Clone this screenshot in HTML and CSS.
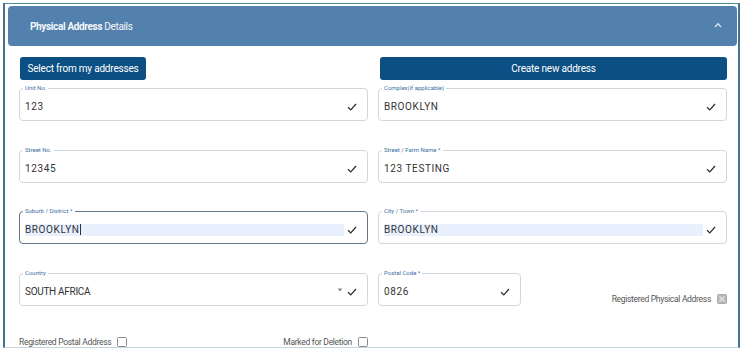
FILE: index.html
```html
<!DOCTYPE html>
<html lang="en">
<head>
<meta charset="utf-8">
<title>Physical Address Details</title>
<link rel="stylesheet" href="styles.css">
</head>
<body>
<div class="frame">
  <div class="header">
    <div class="title"><b>Physical Address</b> Details</div>
    <svg class="chev" width="8" height="6" viewBox="0 0 8 6"><polyline points="1,5 4,1.8 7,5" fill="none" stroke="#dde7f1" stroke-width="1.3"/></svg>
  </div>
  <div class="content">
    <div class="actions">
      <button class="btn btn-left">Select from my addresses</button>
      <button class="btn btn-wide">Create new address</button>
    </div>
    <div class="fields">
      <div class="field">
        <span class="label">Unit No.</span>
        <span class="value">123</span>
        <svg class="check" width="10" height="8" viewBox="0 0 10 8"><polyline points="1,4.3 3.8,7 9,1" fill="none" stroke="#2b2b2b" stroke-width="1.2"/></svg>
      </div>
      <div class="field">
        <span class="label">Complex(if applicable)</span>
        <span class="value">BROOKLYN</span>
        <svg class="check" width="10" height="8" viewBox="0 0 10 8"><polyline points="1,4.3 3.8,7 9,1" fill="none" stroke="#2b2b2b" stroke-width="1.2"/></svg>
      </div>
      <div class="field">
        <span class="label">Street No.</span>
        <span class="value">12345</span>
        <svg class="check" width="10" height="8" viewBox="0 0 10 8"><polyline points="1,4.3 3.8,7 9,1" fill="none" stroke="#2b2b2b" stroke-width="1.2"/></svg>
      </div>
      <div class="field">
        <span class="label">Street / Farm Name *</span>
        <span class="value">123 TESTING</span>
        <svg class="check" width="10" height="8" viewBox="0 0 10 8"><polyline points="1,4.3 3.8,7 9,1" fill="none" stroke="#2b2b2b" stroke-width="1.2"/></svg>
      </div>
      <div class="field focused">
        <span class="label">Suburb / District *</span>
        <span class="value filled">BROOKLYN<span class="caret"></span></span>
        <svg class="check" width="10" height="8" viewBox="0 0 10 8"><polyline points="1,4.3 3.8,7 9,1" fill="none" stroke="#2b2b2b" stroke-width="1.2"/></svg>
      </div>
      <div class="field">
        <span class="label">City / Town *</span>
        <span class="value filled">BROOKLYN</span>
        <svg class="check" width="10" height="8" viewBox="0 0 10 8"><polyline points="1,4.3 3.8,7 9,1" fill="none" stroke="#2b2b2b" stroke-width="1.2"/></svg>
      </div>
      <div class="field">
        <span class="label">Country</span>
        <span class="value plain">SOUTH AFRICA</span>
        <svg class="drop" width="6" height="4" viewBox="0 0 6 4"><polygon points="0.5,0.5 5.5,0.5 3,3.5" fill="#8a8a8a"/></svg>
        <svg class="check" width="10" height="8" viewBox="0 0 10 8"><polyline points="1,4.3 3.8,7 9,1" fill="none" stroke="#2b2b2b" stroke-width="1.2"/></svg>
      </div>
      <div class="postal-row">
        <div class="field postal">
          <span class="label">Postal Code *</span>
          <span class="value">0826</span>
          <svg class="check" width="10" height="8" viewBox="0 0 10 8"><polyline points="1,4.3 3.8,7 9,1" fill="none" stroke="#2b2b2b" stroke-width="1.2"/></svg>
        </div>
        <div class="opt">
          <span>Registered Physical Address</span>
          <span class="box disabled">
            <svg width="8" height="8" viewBox="0 0 8 8"><path d="M1.5,1.5 L6.5,6.5 M6.5,1.5 L1.5,6.5" stroke="#e4e4e4" stroke-width="1.2"/></svg>
          </span>
        </div>
      </div>
      <div class="bottom-row">
        <div class="opt">
          <span>Registered Postal Address</span>
          <span class="box"></span>
        </div>
        <div class="opt">
          <span>Marked for Deletion</span>
          <span class="box"></span>
        </div>
      </div>
    </div>
  </div>
</div>
</body>
</html>
```

FILE: styles.css
```css
* { box-sizing: border-box; }

body {
  margin: 0;
  background: #ffffff;
  font-family: Roboto, "Liberation Sans", Arial, sans-serif;
}

.frame {
  margin: 3px 0 0 3px;
  width: 737px;
  height: 345px;
  border-left: 2px solid #46708f;
  border-right: 2px solid #46708f;
  border-top: 1px solid #4f8a98;
  border-bottom: 1px solid #c7d5de;
  padding: 2px 1px 0 3px;
}

.header {
  height: 40px;
  background: #5381ad;
  border-radius: 4px;
  display: flex;
  align-items: center;
  justify-content: space-between;
  padding: 0 15px 0 22px;
  color: #f4f7fb;
}

.title {
  font-size: 10px;
  letter-spacing: -0.35px;
  font-weight: 400;
}

.title b { font-weight: 700; }

.chev { margin-top: -3px; }

.content {
  padding: 11px 10px 0 11px;
}

.actions {
  display: grid;
  grid-template-columns: 349px 347px;
  column-gap: 12px;
}

.btn {
  height: 23px;
  border: none;
  border-radius: 3px;
  background: #0c4f83;
  color: #ffffff;
  font-family: Roboto, "Liberation Sans", Arial, sans-serif;
  font-size: 10px;
  letter-spacing: -0.2px;
  padding: 0;
}

.btn-left {
  width: 126px;
  margin-left: 1px;
}

.fields {
  margin-top: 8px;
  display: grid;
  grid-template-columns: 349px 349px;
  column-gap: 10px;
  row-gap: 28.5px;
}

.field {
  position: relative;
  height: 33px;
  border: 1px solid #d3d7db;
  border-radius: 4px;
  display: flex;
  align-items: center;
  padding: 5px 10px 0 5px;
}

.field.focused {
  border-color: #66768a;
  border-width: 1.5px;
}

.label {
  position: absolute;
  top: -5px;
  left: 3px;
  padding: 0 2px;
  background: #ffffff;
  color: #3d6fa3;
  font-size: 6px;
  line-height: 8px;
  white-space: nowrap;
}

.value {
  flex: 1;
  font-size: 10px;
  line-height: 12px;
  height: 12px;
  color: #333333;
  letter-spacing: 0.6px;
  margin-right: 3px;
  white-space: nowrap;
}

.value.plain { letter-spacing: -0.3px; }

.value.filled { background: #e8f0fe; }

.caret {
  display: inline-block;
  width: 1px;
  height: 11px;
  background: #333333;
  vertical-align: top;
}

.drop { margin-right: 4px; margin-top: -3px; }

.check { flex: none; }

.postal-row {
  display: flex;
  align-items: flex-end;
  justify-content: space-between;
}

.field.postal { width: 143px; }

.opt {
  display: flex;
  align-items: center;
  gap: 6px;
  font-size: 8.5px;
  color: #555555;
  letter-spacing: -0.3px;
}

.postal-row .opt { margin-bottom: 2px; }

.box {
  width: 10px;
  height: 10px;
  border: 1px solid #8c8c8c;
  border-radius: 1.5px;
  background: #ffffff;
  display: flex;
  align-items: center;
  justify-content: center;
}

.box.disabled {
  background: #b9b9b9;
  border-color: #aaaaaa;
}

.bottom-row {
  grid-column: 1;
  display: flex;
  justify-content: space-between;
  align-items: center;
  margin-top: 2.5px;
}
```
